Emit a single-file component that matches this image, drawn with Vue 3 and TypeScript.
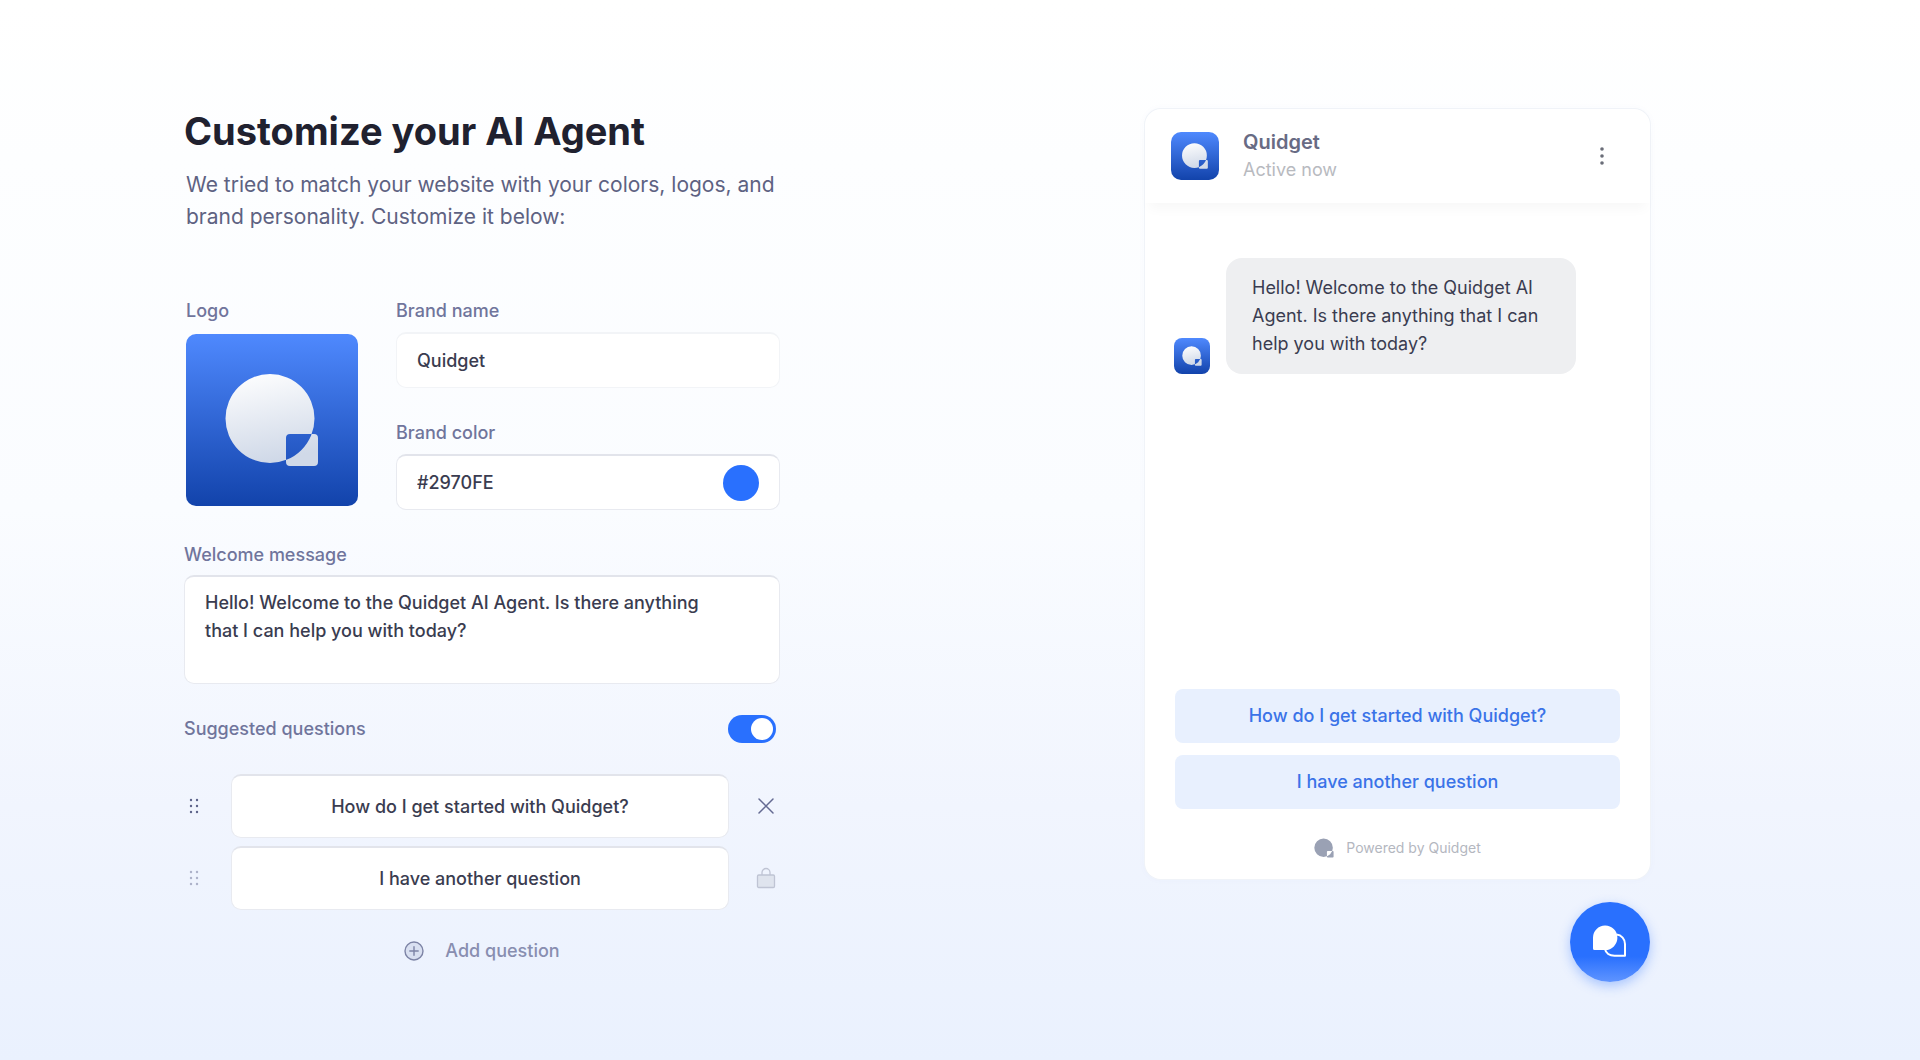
<script setup lang="ts">
import { computed, ref } from 'vue'

interface Question {
  id: number
  text: string
  locked: boolean
}

const brandName = ref('Quidget')
const brandColor = ref('#2970FE')
const welcome = ref('Hello! Welcome to the Quidget AI Agent. Is there anything that I can help you with today?')
const showQuestions = ref(true)
const questions = ref<Question[]>([
  { id: 1, text: 'How do I get started with Quidget?', locked: false },
  { id: 2, text: 'I have another question', locked: true },
])

const swatch = computed({
  get: () => brandColor.value.toLowerCase(),
  set: (value: string) => {
    brandColor.value = value.toUpperCase()
  },
})

const markPath =
  'M128.500 84.500a44.500 44.500 0 1 1-89 0a44.500 44.500 0 1 1 89 0ZM104 100h24a4 4 0 0 1 4 4v24a4 4 0 0 1-4 4h-24a4 4 0 0 1-4-4v-24a4 4 0 0 1 4-4Z'

function addQuestion() {
  questions.value.push({ id: Date.now(), text: '', locked: false })
}

function removeQuestion(id: number) {
  questions.value = questions.value.filter((q) => q.id !== id)
}
</script>

<template>
  <main class="page">
    <section class="editor">
      <h1>Customize your AI Agent</h1>
      <p class="intro">We tried to match your website with your colors, logos, and brand personality. Customize it below:</p>

      <div class="brand">
        <div class="field logo-field">
          <span class="label">Logo</span>
          <div class="logo logo-large">
            <svg viewBox="0 0 172 172" role="img" aria-label="Quidget logo">
              <defs>
                <linearGradient id="mark-fill" x1="0" y1="0" x2="0.2" y2="1">
                  <stop offset="0" stop-color="#ffffff" />
                  <stop offset="1" stop-color="#d0d9e8" />
                </linearGradient>
              </defs>
              <path :d="markPath" fill="url(#mark-fill)" fill-rule="evenodd" />
            </svg>
          </div>
        </div>
        <div class="brand-fields">
          <div class="field">
            <label class="label" for="brand-name">Brand name</label>
            <input id="brand-name" v-model="brandName" class="box soft" type="text" />
          </div>
          <div class="field">
            <label class="label" for="brand-color">Brand color</label>
            <div class="box color-box">
              <input id="brand-color" v-model="brandColor" class="color-text" type="text" />
              <input v-model="swatch" class="swatch" type="color" aria-label="Pick brand color" />
            </div>
          </div>
        </div>
      </div>

      <div class="field welcome">
        <label class="label" for="welcome">Welcome message</label>
        <textarea id="welcome" v-model="welcome" class="box"></textarea>
      </div>

      <div class="switch-row">
        <label class="label" for="suggested">Suggested questions</label>
        <input id="suggested" v-model="showQuestions" class="switch" type="checkbox" role="switch" />
      </div>

      <ul class="questions">
        <li v-for="q in questions" :key="q.id">
          <button class="icon-button handle" :class="{ faded: q.locked }" type="button" aria-label="Reorder question">
            <svg width="10" height="16" viewBox="0 0 10 16" fill="#5d638a">
              <circle cx="2" cy="2" r="1.200" /><circle cx="8" cy="2" r="1.200" />
              <circle cx="2" cy="8" r="1.200" /><circle cx="8" cy="8" r="1.200" />
              <circle cx="2" cy="14" r="1.200" /><circle cx="8" cy="14" r="1.200" />
            </svg>
          </button>
          <input v-model="q.text" class="box question" type="text" aria-label="Suggested question" />
          <svg v-if="q.locked" class="lock" width="20" height="22" viewBox="0 0 20 22" fill="none" stroke="#bfc4d4" stroke-width="1.300">
            <rect x="1.500" y="8" width="17" height="12.500" rx="1.200" fill="#dfe4ee" />
            <path d="M6 8V5.500a4 4 0 0 1 8 0V8" />
          </svg>
          <button v-else class="icon-button" type="button" aria-label="Remove question" @click="removeQuestion(q.id)">
            <svg width="18" height="18" viewBox="0 0 18 18" fill="none" stroke="#646a92" stroke-width="1.500" stroke-linecap="round">
              <path d="M2 2l14 14M16 2L2 16" />
            </svg>
          </button>
        </li>
      </ul>

      <button class="add" type="button" @click="addQuestion">
        <svg width="20" height="20" viewBox="0 0 20 20" fill="none" stroke="#7d84a6" stroke-width="1.400">
          <circle cx="10" cy="10" r="9" fill="#d9e0f1" />
          <path d="M10 5.800v8.400M5.800 10h8.400" stroke-linecap="round" />
        </svg>
        Add question
      </button>
    </section>

    <aside class="preview">
      <div class="chat">
        <header>
          <div class="logo logo-medium">
            <svg viewBox="0 0 172 172" aria-hidden="true">
              <path :d="markPath" fill="url(#mark-fill)" fill-rule="evenodd" />
            </svg>
          </div>
          <div class="who">
            <strong>{{ brandName }}</strong>
            <span>Active now</span>
          </div>
          <button class="icon-button menu" type="button" aria-label="Chat menu">
            <svg width="6" height="20" viewBox="0 0 6 20" fill="#6a6d78">
              <circle cx="3" cy="3" r="1.800" /><circle cx="3" cy="10" r="1.800" /><circle cx="3" cy="17" r="1.800" />
            </svg>
          </button>
        </header>
        <div class="messages">
          <div class="logo logo-small">
            <svg viewBox="0 0 172 172" aria-hidden="true">
              <path :d="markPath" fill="url(#mark-fill)" fill-rule="evenodd" />
            </svg>
          </div>
          <p class="bubble">{{ welcome }}</p>
        </div>
        <div v-if="showQuestions" class="replies">
          <button v-for="q in questions" :key="q.id" type="button">{{ q.text }}</button>
        </div>
        <footer>
          <svg width="20" height="20" viewBox="38 38 96 96" fill="#9aa1b4" aria-hidden="true">
            <path :d="markPath" fill-rule="evenodd" />
          </svg>
          Powered by Quidget
        </footer>
      </div>
      <button class="launcher" type="button" aria-label="Open chat">
        <svg width="34" height="34" viewBox="0 0 34 34" fill="none">
          <path d="M1.500 25A1.500 1.500 0 0 1 0 23.500V13a12.200 12.200 0 1 1 12.200 12Z" fill="#fff" />
          <path d="M23.500 9.500C28.500 10 32 14 32 19V30.800H21.500C16.500 30.800 12.800 28 12 24" stroke="#fff" stroke-width="2" stroke-linejoin="round" />
        </svg>
      </button>
    </aside>
  </main>
</template>

<style>
body {
  margin: 0;
  background: #eaf1fe;
}
</style>

<style scoped>
.page {
  box-sizing: border-box;
  min-height: 100vh;
  padding: 109px 270px 56px 184px;
  display: flex;
  align-items: flex-start;
  justify-content: space-between;
  gap: 48px;
  background: linear-gradient(180deg, #ffffff 0%, #fdfeff 15%, #fafcff 48%, #f1f5fe 76%, #eaf1fe 100%);
  font-family: Inter, "Liberation Sans", sans-serif;
  font-size: 18px;
  line-height: 28px;
  font-weight: 500;
  color: #3a3c50;
}

button,
input,
textarea {
  font: inherit;
  color: inherit;
}

button {
  border: 0;
  padding: 0;
  background: none;
  cursor: pointer;
}

svg {
  display: block;
  flex: none;
}

.editor {
  flex: 0 1 596px;
  min-width: 0;
}

h1 {
  margin: 0;
  font-size: 38px;
  line-height: 44px;
  font-weight: 700;
  color: #20212f;
}

.intro {
  margin: 16px 0 0;
  padding-left: 2px;
  font-size: 21px;
  line-height: 32px;
  font-weight: 400;
  color: #5e6282;
}

.field {
  display: flex;
  flex-direction: column;
  gap: 9px;
}

.logo-field {
  gap: 11px;
}

.label {
  line-height: 24px;
  color: #70759c;
}

.brand {
  display: flex;
  gap: 38px;
  margin-top: 66px;
  padding-left: 2px;
}

.brand-fields {
  flex: 1;
  min-width: 0;
  display: flex;
  flex-direction: column;
  gap: 33px;
}

.logo {
  flex: none;
  background: linear-gradient(180deg, #4f89fe 0%, #1243ab 100%);
}

.logo svg {
  width: 100%;
  height: 100%;
}

.logo-large {
  width: 172px;
  height: 172px;
  border-radius: 10px;
}

.logo-medium {
  width: 48px;
  height: 48px;
  border-radius: 10px;
}

.logo-small {
  width: 36px;
  height: 36px;
  border-radius: 8px;
}

.box {
  box-sizing: border-box;
  width: 100%;
  height: 56px;
  padding: 0 20px;
  border: 1px solid #e8eaf0;
  border-top: 2px solid #e2e4eb;
  border-radius: 10px;
  background: #fff;
  outline: none;
}

.soft {
  border-color: #f2f4f7;
}

.color-box {
  display: flex;
  align-items: center;
  gap: 12px;
}

.color-text {
  flex: 1;
  min-width: 0;
  padding: 0;
  border: 0;
  background: none;
  outline: none;
}

.swatch {
  appearance: none;
  width: 36px;
  height: 36px;
  padding: 0;
  border: 0;
  background: none;
}

.swatch::-webkit-color-swatch-wrapper {
  padding: 0;
}

.swatch::-webkit-color-swatch {
  border: 0;
  border-radius: 50%;
}

.welcome {
  margin-top: 33px;
  gap: 8px;
}

textarea.box {
  display: block;
  height: 109px;
  padding: 12px 48px 12px 20px;
  resize: none;
}

.switch-row {
  display: flex;
  align-items: center;
  justify-content: space-between;
  margin-top: 31px;
  padding-right: 4px;
}

.switch {
  appearance: none;
  box-sizing: border-box;
  width: 48px;
  height: 28px;
  margin: 0;
  padding: 3px;
  display: flex;
  border-radius: 14px;
  background: #c4cbdc;
}

.switch::before {
  content: "";
  width: 22px;
  height: 22px;
  border-radius: 50%;
  background: #fff;
}

.switch:checked {
  justify-content: flex-end;
  background: #2970fe;
}

.questions {
  list-style: none;
  margin: 31px 0 0;
  padding: 0;
  display: grid;
  gap: 8px;
}

.questions li {
  display: grid;
  grid-template-columns: 20px minmax(0, 1fr) 20px;
  align-items: center;
  gap: 27px;
  padding-right: 4px;
}

.question {
  height: 64px;
  text-align: center;
}

.icon-button {
  display: grid;
  place-items: center;
}

.faded {
  opacity: 0.45;
}

.add {
  display: flex;
  align-items: center;
  gap: 21px;
  margin: 29px auto 0;
  line-height: 24px;
  color: #888eb0;
}

.preview {
  flex: 0 1 505px;
  min-width: 0;
  display: flex;
  flex-direction: column;
  gap: 23px;
}

.chat {
  border-radius: 16px;
  background: #fff;
  box-shadow: 0 0 0 1px #f0f3f8, 0 0 8px rgba(60, 90, 180, 0.03);
}

header {
  box-sizing: border-box;
  height: 94px;
  padding: 0 36px 0 26px;
  display: flex;
  align-items: center;
  gap: 24px;
  border-radius: 16px 16px 0 0;
  box-shadow: 0 10px 12px -4px rgba(0, 0, 0, 0.03);
}

.who {
  flex: 1;
  display: grid;
}

.who strong {
  font-size: 20px;
  font-weight: 600;
  color: #686b84;
}

.who span {
  font-weight: 400;
  color: #b8babf;
}

.menu {
  width: 24px;
  height: 24px;
}

.messages {
  box-sizing: border-box;
  min-height: 486px;
  padding: 55px 29px 24px;
  display: flex;
  align-items: flex-end;
  align-content: flex-start;
  flex-wrap: wrap;
  gap: 16px;
}

.bubble {
  box-sizing: border-box;
  flex: 0 1 350px;
  min-width: 0;
  margin: 0;
  padding: 16px 26px;
  border-radius: 16px;
  background: #eeeff1;
  font-weight: 400;
}

.replies {
  display: grid;
  gap: 12px;
  padding: 0 30px;
}

.replies button {
  height: 54px;
  border-radius: 8px;
  background: #e8f0fe;
  color: #3a73e8;
}

footer {
  display: flex;
  align-items: center;
  justify-content: center;
  gap: 12px;
  padding: 28px 0 20px;
  font-size: 14px;
  line-height: 22px;
  font-weight: 400;
  color: #b4b7bf;
}

.launcher {
  align-self: flex-end;
  width: 80px;
  height: 80px;
  display: grid;
  place-items: center;
  border-radius: 50%;
  background: linear-gradient(180deg, #2970fe 0%, #2970fe 68%, #5f94ff 100%);
  box-shadow: 0 4px 12px rgba(41, 112, 254, 0.35);
}
</style>
